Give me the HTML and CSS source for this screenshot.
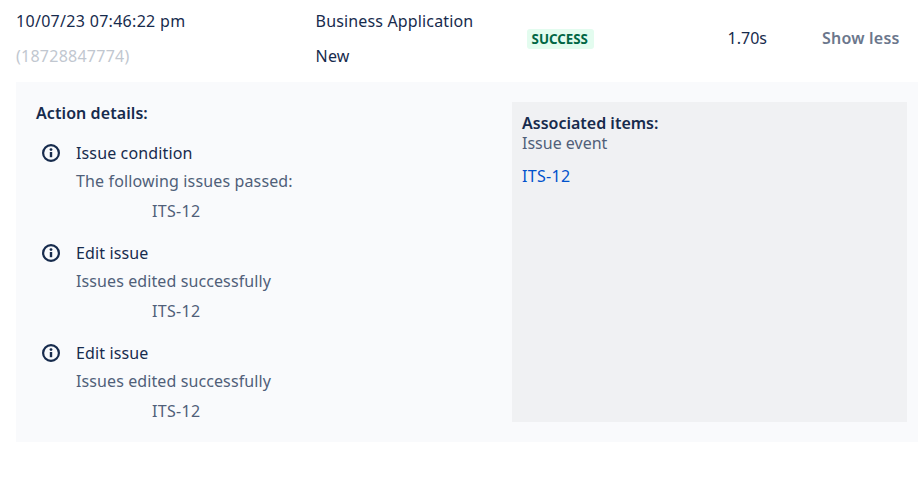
FILE: index.html
```html
<!DOCTYPE html>
<html lang="en">
<head>
<meta charset="utf-8">
<title>Audit log</title>
<link rel="stylesheet" href="styles.css">
</head>
<body>
<div class="row">
  <div class="col-date">
    <div class="date">10/07/23 07:46:22 pm</div>
    <div class="id">(18728847774)</div>
  </div>
  <div class="col-type">
    <div class="type">Business Application</div>
    <div class="type">New</div>
  </div>
  <div class="col-status"><span class="lozenge">SUCCESS</span></div>
  <div class="col-time">1.70s</div>
  <div class="col-toggle">Show less</div>
</div>
<div class="panel">
  <div class="actions">
    <div class="heading">Action details:</div>
    <div class="action">
      <svg class="icon" viewBox="0 0 18 18"><circle cx="9" cy="9" r="7.9" fill="none" stroke="#172b4d" stroke-width="2.2"/><rect x="7.8" y="8" width="2.4" height="5.2" fill="#172b4d"/><circle cx="9" cy="5.6" r="1.4" fill="#172b4d"/></svg>
      <div class="body">
        <div class="title">Issue condition</div>
        <div class="desc wide">The following issues passed:</div>
        <div class="key">ITS-12</div>
      </div>
    </div>
    <div class="action">
      <svg class="icon" viewBox="0 0 18 18"><circle cx="9" cy="9" r="7.9" fill="none" stroke="#172b4d" stroke-width="2.2"/><rect x="7.8" y="8" width="2.4" height="5.2" fill="#172b4d"/><circle cx="9" cy="5.6" r="1.4" fill="#172b4d"/></svg>
      <div class="body">
        <div class="title">Edit issue</div>
        <div class="desc">Issues edited successfully</div>
        <div class="key">ITS-12</div>
      </div>
    </div>
    <div class="action">
      <svg class="icon" viewBox="0 0 18 18"><circle cx="9" cy="9" r="7.9" fill="none" stroke="#172b4d" stroke-width="2.2"/><rect x="7.8" y="8" width="2.4" height="5.2" fill="#172b4d"/><circle cx="9" cy="5.6" r="1.4" fill="#172b4d"/></svg>
      <div class="body">
        <div class="title">Edit issue</div>
        <div class="desc">Issues edited successfully</div>
        <div class="key">ITS-12</div>
      </div>
    </div>
  </div>
  <div class="assoc">
    <div class="assoc-head">Associated items:</div>
    <div class="assoc-event">Issue event</div>
    <div class="assoc-link">ITS-12</div>
  </div>
</div>
</body>
</html>
```
FILE: styles.css
```css
html, body { margin: 0; padding: 0; background: #fff; }
body { width: 918px; height: 488px; overflow: hidden; font-family: "Noto Sans", sans-serif; font-size: 16px; color: #172b4d; }
.row { display: flex; height: 82px; }
.col-date { width: 300px; padding-left: 16px; }
.date { line-height: 20px; margin-top: 11px; letter-spacing: 0.3px; }
.id { line-height: 20px; margin-top: 15px; color: #c1c7d0; letter-spacing: 0.25px; }
.col-type { width: 211px; margin-left: -0.4px; }
.type { line-height: 20px; margin-top: 11px; letter-spacing: 0.15px; }
.type + .type { margin-top: 15px; }
.col-status { width: 201px; padding-top: 30px; }
.lozenge { display: block; width: fit-content; background: #e3fcef; color: #006644; font-size: 13.3px; font-weight: 700; line-height: 20px; height: 20px; padding: 0 6px 0 5px; border-radius: 3px; margin-top: -1px; }
.col-time { width: 94.5px; line-height: 20px; padding-top: 28px; }
.col-toggle { line-height: 20px; padding-top: 28px; font-weight: 600; color: #6b778c; letter-spacing: 0.2px; }
.panel { display: flex; margin-left: 16px; height: 360px; background: #f9fafc; padding: 20px 11px 20px 20px; box-sizing: border-box; }
.actions { width: 476px; }
.heading { font-weight: 600; line-height: 20px; margin-top: 1px; margin-bottom: 10px; letter-spacing: 0.08px; }
.action { display: flex; margin-bottom: 12px; }
.icon { width: 18px; height: 18px; margin: 11px 16px 0 6px; flex: none; }
.body { line-height: 20px; }
.title { margin-top: 10px; letter-spacing: 0.13px; }
.desc { margin-top: 8px; color: #505f79; letter-spacing: 0.1px; }
.desc.wide { letter-spacing: 0.14px; }
.key { margin-top: 10px; padding-left: 76px; color: #505f79; letter-spacing: 0.3px; }
.assoc { flex: 1; background: #f0f1f3; padding: 11px 10px; }
.assoc-head { font-weight: 600; line-height: 20px; }
.assoc-event { line-height: 20px; color: #505f79; }
.assoc-link { margin-top: 13px; line-height: 20px; color: #0052cc; letter-spacing: 0.3px; }
```
